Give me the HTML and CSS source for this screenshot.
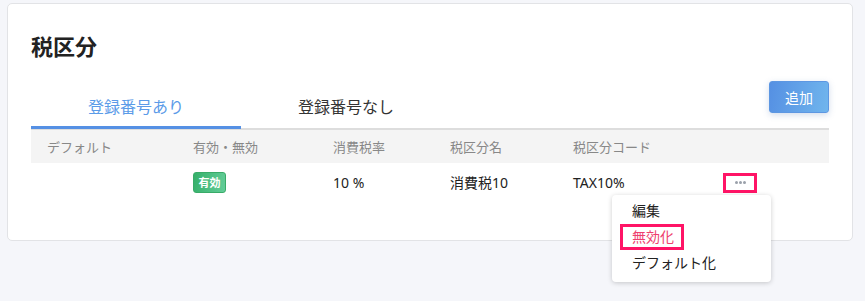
FILE: index.html
```html
<!DOCTYPE html>
<html lang="ja">
<head>
<meta charset="utf-8">
<link rel="stylesheet" href="styles.css">
</head>
<body>
<div class="page">
  <div class="card">
    <h1 class="title">税区分</h1>
    <div class="toolbar">
      <div class="tabs">
        <div class="tab active">登録番号あり</div>
        <div class="tab">登録番号なし</div>
      </div>
      <button class="add-btn">追加</button>
    </div>
    <div class="table">
      <div class="row head">
        <div class="cell">デフォルト</div>
        <div class="cell">有効・無効</div>
        <div class="cell">消費税率</div>
        <div class="cell">税区分名</div>
        <div class="cell">税区分コード</div>
        <div class="cell"></div>
      </div>
      <div class="row body">
        <div class="cell"></div>
        <div class="cell"><span class="badge">有効</span></div>
        <div class="cell">10 %</div>
        <div class="cell">消費税10</div>
        <div class="cell">TAX10%</div>
        <div class="cell"><span class="more"><i></i><i></i><i></i></span></div>
      </div>
    </div>
  </div>
  <div class="menu">
    <div class="menu-item">編集</div>
    <div class="menu-item danger"><span class="hl">無効化</span></div>
    <div class="menu-item">デフォルト化</div>
  </div>
</div>
</body>
</html>
```
FILE: styles.css
```css
html, body {
  margin: 0;
  padding: 0;
  background: #f5f6fa;
  font-family: "Noto Sans", "Noto Sans CJK JP", sans-serif;
  color: #222;
}
.page {
  position: relative;
  height: 301px;
  padding-top: 3px;
  box-sizing: border-box;
}
.card {
  box-sizing: border-box;
  width: 846px;
  height: 238px;
  margin: 0 0 0 7px;
  padding: 27px 23px 0 23px;
  background: #fff;
  border: 1px solid #e2e3e6;
  border-radius: 5px;
}
.title {
  margin: 0;
  font-size: 22px;
  line-height: 30px;
  font-weight: 700;
  color: #222;
}
.toolbar {
  display: flex;
  align-items: flex-end;
  justify-content: space-between;
  margin-top: 20px;
  border-bottom: 2px solid #dddddd;
  height: 49px;
  box-sizing: border-box;
}
.tabs {
  display: flex;
  align-self: stretch;
  align-items: flex-end;
}
.tab {
  width: 210px;
  text-align: center;
  font-size: 16px;
  line-height: 22px;
  padding-bottom: 8px;
  color: #333;
  border-bottom: 3px solid transparent;
  margin-bottom: -1px;
}
.tab.active {
  color: #5b9be8;
  border-bottom-color: #5590e4;
}
.add-btn {
  align-self: flex-start;
  width: 60px;
  height: 32px;
  border: 1px solid #5d97e2;
  border-radius: 3px;
  background: linear-gradient(100deg, #5590e3, #70b5ed);
  color: #fff;
  font-family: inherit;
  font-size: 14px;
  box-shadow: 0 2px 6px rgba(80, 120, 180, 0.25);
  padding: 0;
}
.table {
  display: flex;
  flex-direction: column;
}
.row {
  display: grid;
  grid-template-columns: 146px 140px 117px 123px 150px 122px;
  align-items: center;
}
.row.head {
  height: 33px;
  background: #f4f4f4;
  color: #888;
  font-size: 13px;
}
.row.body {
  height: 38px;
  font-size: 14px;
  color: #222;
}
.cell {
  padding-left: 16px;
}
.badge {
  display: inline-block;
  box-sizing: border-box;
  width: 33px;
  height: 21px;
  line-height: 19px;
  text-align: center;
  font-size: 11px;
  font-weight: 700;
  color: #fff;
  background: linear-gradient(100deg, #35b06a, #63cd98);
  border: 1px solid #39ab68;
  border-radius: 3px;
  vertical-align: middle;
}
.more {
  display: inline-flex;
  box-sizing: border-box;
  width: 34px;
  height: 20px;
  border: 3px solid #ff1466;
  align-items: center;
  justify-content: center;
  gap: 1px;
  vertical-align: middle;
}
.more i {
  width: 3px;
  height: 3px;
  background: #9aa0aa;
  border-radius: 50%;
}
.menu {
  position: absolute;
  z-index: 10;
  left: 612px;
  top: 195px;
  width: 159px;
  height: 87px;
  box-sizing: border-box;
  padding-top: 3px;
  background: #fff;
  border-radius: 4px;
  box-shadow: 0 1px 5px rgba(0, 0, 0, 0.2);
}
.menu-item {
  height: 26px;
  line-height: 26px;
  padding-left: 20px;
  font-size: 14px;
  color: #222;
}
.menu-item.danger {
  padding-left: 8px;
  color: #ee3f6e;
}
.hl {
  display: inline-block;
  box-sizing: border-box;
  height: 26px;
  line-height: 20px;
  padding: 0 7px 0 9px;
  border: 3px solid #ff1466;
}
```
